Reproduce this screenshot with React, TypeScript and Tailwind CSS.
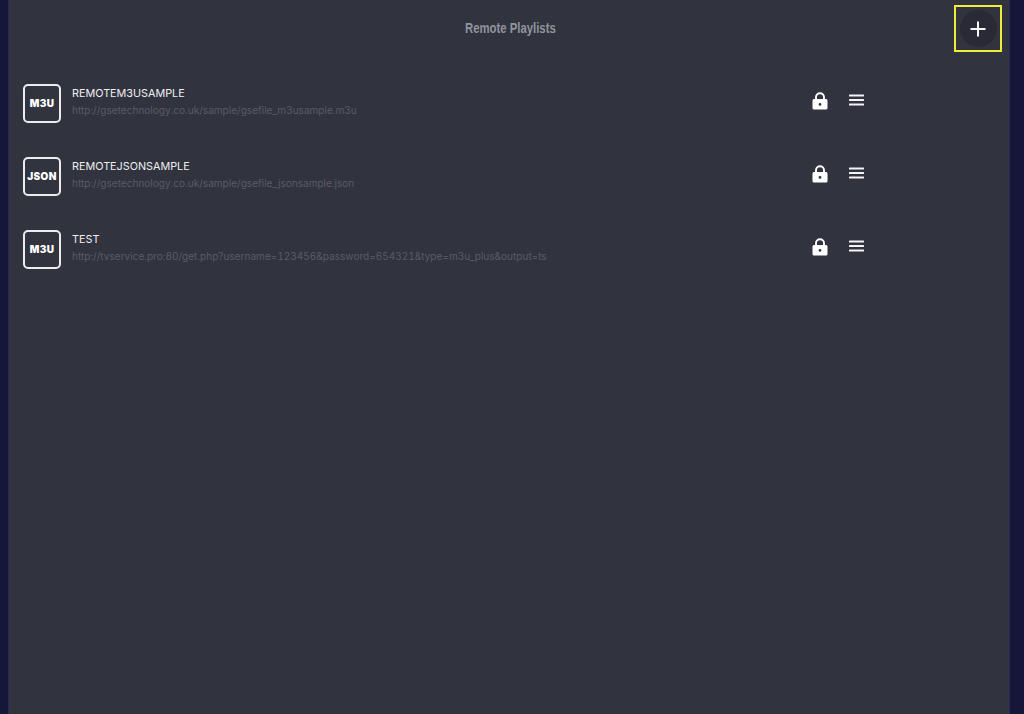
const playlists = [
  { type: "M3U", name: "REMOTEM3USAMPLE", url: "http://gsetechnology.co.uk/sample/gsefile_m3usample.m3u" },
  { type: "JSON", name: "REMOTEJSONSAMPLE", url: "http://gsetechnology.co.uk/sample/gsefile_jsonsample.json" },
  { type: "M3U", name: "TEST", url: "http://tvservice.pro:80/get.php?username=123456&password=654321&type=m3u_plus&output=ts" },
];

function LockIcon() {
  return (
    <svg width="16" height="18" viewBox="0 0 16 18" fill="none">
      <path d="M4 8V5.2a4 4 0 0 1 8 0V8" stroke="#fff" strokeWidth="1.9" />
      <path
        fillRule="evenodd"
        clipRule="evenodd"
        fill="#fff"
        d="M2 7h12a1.5 1.5 0 0 1 1.5 1.5v7.6A1.5 1.5 0 0 1 14 17.6H2A1.5 1.5 0 0 1 .5 16.100V8.500A1.500 1.500 0 0 1 2 7Zm6 4a1.400 1.400 0 1 0 0 2.800A1.400 1.400 0 0 0 8 11Z"
      />
    </svg>
  );
}

function MenuIcon() {
  return (
    <svg width="15" height="12" viewBox="0 0 15 12" fill="#f4f4f6">
      <rect x="0" y="0.5" width="15" height="2" rx="0.5" />
      <rect x="0" y="5" width="15" height="2" rx="0.5" />
      <rect x="0" y="9.500" width="15" height="2" rx="0.5" />
    </svg>
  );
}

function PlaylistRow({ type, name, url }: { type: string; name: string; url: string }) {
  return (
    <div className="flex h-[73px] items-start">
      <div className="flex h-[39px] w-[38px] items-center justify-center rounded-[5px] border-2 border-[#ececef] text-[10px] font-black tracking-[0.35px] text-white">
        {type}
      </div>
      <div className="ml-[11px] w-[740px] pt-[3px]">
        <div className="text-[10.800px] leading-[14px] text-[#efeff1]">{name}</div>
        <div className="mt-[2px] text-[10.050px] leading-[14px] tabular-nums text-[#5a5c66]">{url}</div>
      </div>
      <div className="mt-[8px] flex items-start">
        <LockIcon />
        <div className="ml-[21px] mt-[2px]">
          <MenuIcon />
        </div>
      </div>
    </div>
  );
}

export default function App() {
  return (
    <div className="flex h-[714px] w-[1024px] overflow-hidden bg-[#14173a] font-['Inter',sans-serif]">
      <main className="ml-[8px] w-[1002px] border-x border-[#272a58] bg-[#31333f]">
        <header className="flex h-[84px] items-start">
          <h1 className="ml-[456px] mt-[20px] w-[91px] origin-left scale-x-[0.81] whitespace-nowrap font-['Liberation_Sans',sans-serif] text-[14px] leading-[17px] font-bold text-[#91949d]">
            Remote Playlists
          </h1>
          <button className="ml-[398px] mt-[5px] flex h-[47px] w-[48px] items-center justify-center border-2 border-[#eded3a]">
            <span className="flex h-[37px] w-[37px] items-center justify-center rounded-full bg-[#292a35]">
              <svg width="16" height="16" viewBox="0 0 16 16" fill="#f6f6f8">
                <rect x="7" y="0.500" width="2" height="15" />
                <rect x="0.500" y="7" width="15" height="2" />
              </svg>
            </span>
          </button>
        </header>
        <div className="pl-[14px]">
          {playlists.map((p, i) => (
            <PlaylistRow key={i} {...p} />
          ))}
        </div>
      </main>
    </div>
  );
}
